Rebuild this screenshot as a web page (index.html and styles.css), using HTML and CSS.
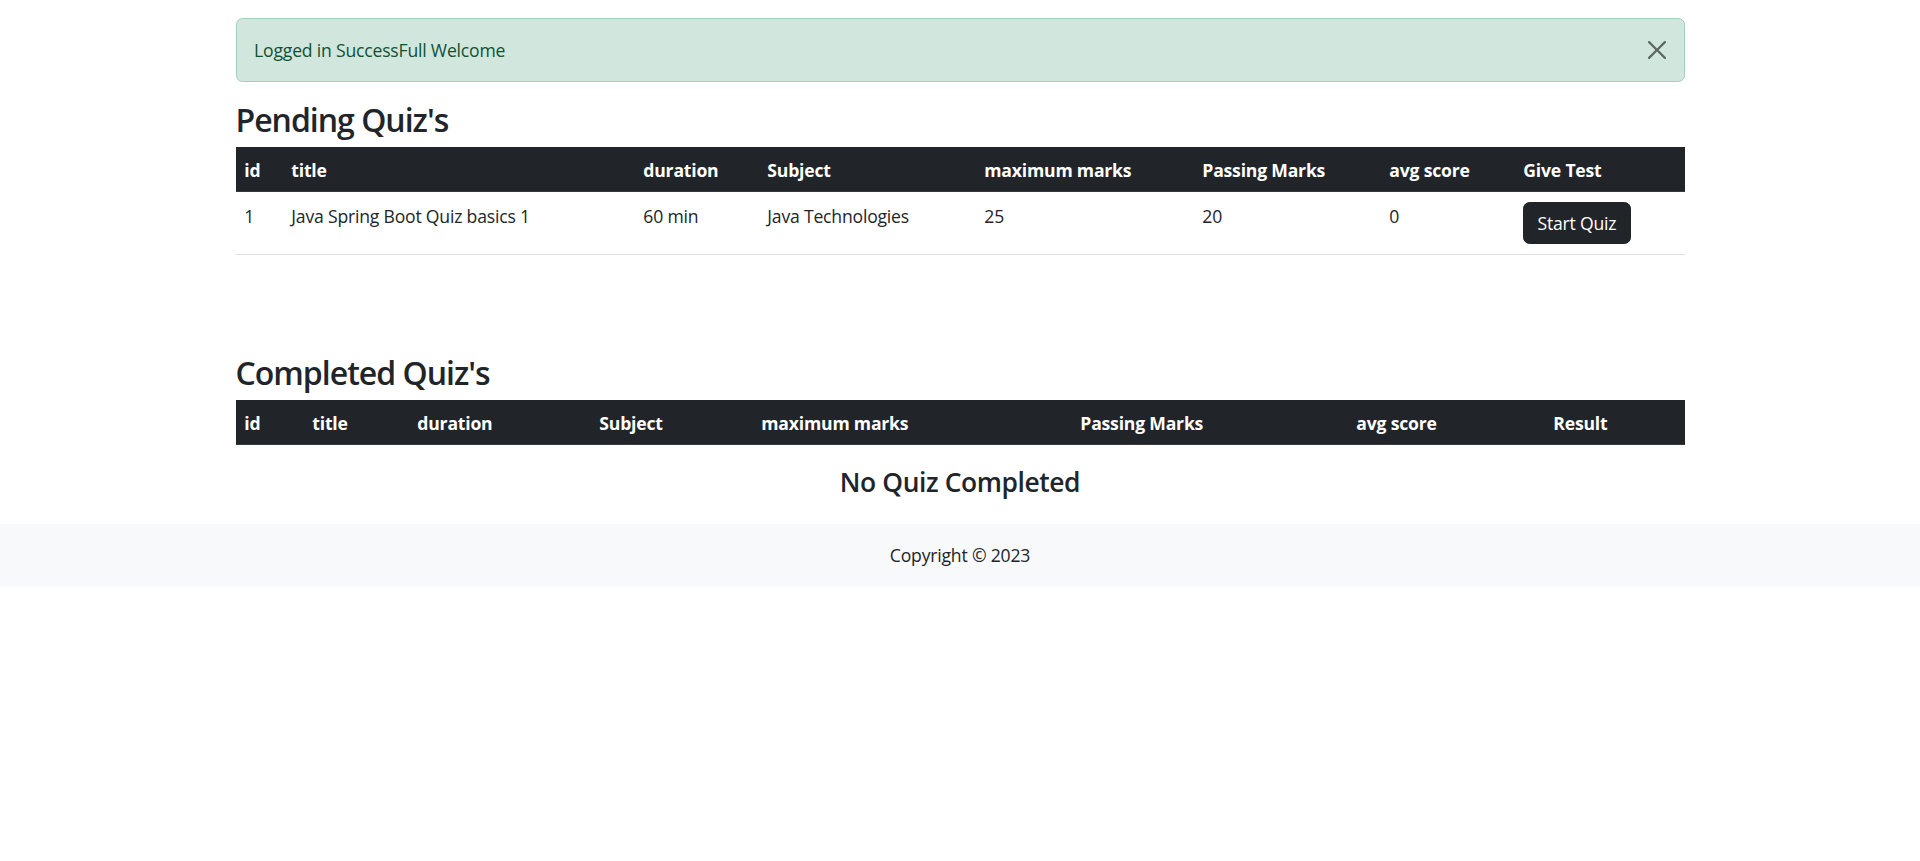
FILE: index.html
```html
<!DOCTYPE html>
<html lang="en">
<head>
    <meta charset="UTF-8">
    <meta name="viewport" content="width=device-width, initial-scale=1.0">
    <title>Dashboard - Quiz Portal</title>
    <link rel="stylesheet" href="styles.css">
</head>
<body>
    <div class="container">
        <div class="alert alert-success">
            Logged in SuccessFull Welcome
            <button type="button" class="btn-close" aria-label="Close">
                <svg viewBox="0 0 16 16" width="18" height="18"><path d="M.293.293a1 1 0 0 1 1.414 0L8 6.586 14.293.293a1 1 0 1 1 1.414 1.414L9.414 8l6.293 6.293a1 1 0 0 1-1.414 1.414L8 9.414l-6.293 6.293a1 1 0 0 1-1.414-1.414L6.586 8 .293 1.707a1 1 0 0 1 0-1.414z"/></svg>
            </button>
        </div>

        <h2 class="section-title">Pending Quiz's</h2>
        <table class="quiz-table pending">
            <thead>
                <tr>
                    <th>id</th>
                    <th>title</th>
                    <th>duration</th>
                    <th>Subject</th>
                    <th>maximum marks</th>
                    <th>Passing Marks</th>
                    <th>avg score</th>
                    <th>Give Test</th>
                </tr>
            </thead>
            <tbody>
                <tr>
                    <td>1</td>
                    <td>Java Spring Boot Quiz basics 1</td>
                    <td>60 min</td>
                    <td>Java Technologies</td>
                    <td>25</td>
                    <td>20</td>
                    <td>0</td>
                    <td><button type="button" class="btn-dark">Start Quiz</button></td>
                </tr>
            </tbody>
        </table>

        <h2 class="section-title completed-title">Completed Quiz's</h2>
        <table class="quiz-table completed">
            <thead>
                <tr>
                    <th>id</th>
                    <th>title</th>
                    <th>duration</th>
                    <th>Subject</th>
                    <th>maximum marks</th>
                    <th>Passing Marks</th>
                    <th>avg score</th>
                    <th>Result</th>
                </tr>
            </thead>
            <tbody></tbody>
        </table>
        <h4 class="empty-msg">No Quiz Completed</h4>
    </div>

    <footer class="footer">Copyright &copy; 2023</footer>
</body>
</html>
```

FILE: styles.css
```css
*, *::before, *::after {
    box-sizing: border-box;
}
body {
    margin: 0;
    font-family: "Open Sans", "Noto Sans", sans-serif;
    font-size: 17.6px;
    line-height: 1.5;
    letter-spacing: -0.2px;
    color: #212529;
    background-color: #fff;
}
.container {
    width: 1449px;
    margin: 0 auto;
    padding-top: 18px;
}
.alert {
    position: relative;
    padding: 17.6px 56px 17.6px 17.6px;
    margin-bottom: 17.6px;
    border: 1px solid #a3cfbb;
    border-radius: 6.6px;
}
.alert-success {
    background-color: #d1e7dd;
    color: #0f5132;
}
.btn-close {
    position: absolute;
    top: 0;
    right: 0;
    padding: 22px 17.6px;
    border: none;
    background: transparent;
    line-height: 0;
    cursor: pointer;
    opacity: 0.55;
}
.btn-close svg {
    fill: #000;
}
.section-title {
    margin: 0 0 6px;
    font-size: 32px;
    font-weight: 600;
    line-height: 42px;
    letter-spacing: -1px;
}
.completed-title {
    margin-top: 97px;
}
.quiz-table {
    width: 100%;
    table-layout: fixed;
    border-collapse: collapse;
    margin-bottom: 17.6px;
}
.quiz-table.completed {
    margin-bottom: 0;
}
.quiz-table th,
.quiz-table td {
    text-align: left;
    vertical-align: top;
}
.quiz-table th {
    padding: 9.8px 8.8px 7.8px;
    background-color: #212529;
    color: #fff;
    font-weight: 700;
    border-bottom: 1px solid #373b3e;
}
.quiz-table td {
    padding: 10.8px 8.8px 6.8px;
    border-bottom: 1px solid #dee2e6;
}
.pending th:nth-child(1) { width: 47px; }
.pending th:nth-child(2) { width: 352px; }
.pending th:nth-child(3) { width: 124px; }
.pending th:nth-child(4) { width: 217px; }
.pending th:nth-child(5) { width: 218px; }
.pending th:nth-child(6) { width: 187px; }
.pending th:nth-child(7) { width: 134px; }
.completed th:nth-child(1) { width: 68px; }
.completed th:nth-child(2) { width: 105px; }
.completed th:nth-child(3) { width: 182px; }
.completed th:nth-child(4) { width: 162px; }
.completed th:nth-child(5) { width: 319px; }
.completed th:nth-child(6) { width: 276px; }
.completed th:nth-child(7) { width: 197px; }
.btn-dark {
    margin: -1px 0 4px;
    padding: 6.6px 13.2px;
    font-family: inherit;
    font-size: 17.6px;
    line-height: 26.4px;
    letter-spacing: -0.2px;
    color: #fff;
    background-color: #212529;
    border: 1px solid #212529;
    border-radius: 6.6px;
    cursor: pointer;
}
.empty-msg {
    margin: 21.6px 0 0;
    text-align: center;
    font-size: 26.4px;
    font-weight: 600;
    line-height: 31.7px;
    letter-spacing: -0.4px;
}
.footer {
    margin-top: 25px;
    padding: 18.5px 0;
    text-align: center;
    background-color: #f8f9fa;
}
```
